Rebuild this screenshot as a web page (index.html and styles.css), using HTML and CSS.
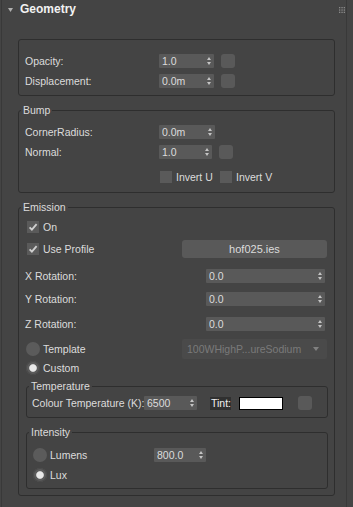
FILE: index.html
```html
<!DOCTYPE html>
<html lang="en">
<head>
    <meta charset="UTF-8">
    <meta name="viewport" content="width=device-width, initial-scale=1.0">
    <title>Geometry</title>
    <link rel="stylesheet" href="styles.css">
</head>
<body>
<div class="rollout">
    <div class="rollout-head">
        <svg class="fold" width="5" height="4" viewBox="0 0 5 4"><path d="M0 0H5L2.5 4Z"/></svg>
        <span class="title">Geometry</span>
        <svg class="grip" width="6" height="6" viewBox="0 0 6 6">
            <rect x="0" y="0" width="1.3" height="1.3"/><rect x="2.4" y="0" width="1.3" height="1.3"/><rect x="4.7" y="0" width="1.3" height="1.3"/>
            <rect x="0" y="2.4" width="1.3" height="1.3"/><rect x="2.4" y="2.4" width="1.3" height="1.3"/><rect x="4.7" y="2.4" width="1.3" height="1.3"/>
            <rect x="0" y="4.7" width="1.3" height="1.3"/><rect x="2.4" y="4.7" width="1.3" height="1.3"/><rect x="4.7" y="4.7" width="1.3" height="1.3"/>
        </svg>
    </div>

    <!-- opacity / displacement -->
    <div class="group first">
        <div class="row">
            <span class="lbl">Opacity:</span>
            <span class="spin w55"><span class="val">1.0</span><span class="arr"><i></i><i></i></span></span>
            <span class="map"></span>
        </div>
        <div class="row gap6">
            <span class="lbl">Displacement:</span>
            <span class="spin w55"><span class="val">0.0m</span><span class="arr"><i></i><i></i></span></span>
            <span class="map"></span>
        </div>
    </div>

    <fieldset class="group bump">
        <legend>Bump</legend>
        <div class="row r-corner">
            <span class="lbl">CornerRadius:</span>
            <span class="spin w56"><span class="val">0.0m</span><span class="arr"><i></i><i></i></span></span>
        </div>
        <div class="row gap6">
            <span class="lbl">Normal:</span>
            <span class="spin w53"><span class="val">1.0</span><span class="arr"><i></i><i></i></span></span>
            <span class="map"></span>
        </div>
        <div class="row r-invert">
            <span class="pad"></span>
            <span class="cb"></span><span class="cb-text">Invert U</span>
            <span class="cb"></span><span class="cb-text">Invert V</span>
        </div>
    </fieldset>

    <fieldset class="group emission">
        <legend>Emission</legend>
        <div class="row r-on">
            <span class="cb"><svg width="12" height="12" viewBox="0 0 12 12"><path d="M2.6 6.3L4.9 8.7L9.6 3.1"/></svg></span>
            <span class="cb-text">On</span>
        </div>
        <div class="row r-profile">
            <span class="chk">
                <span class="cb"><svg width="12" height="12" viewBox="0 0 12 12"><path d="M2.6 6.3L4.9 8.7L9.6 3.1"/></svg></span>
                <span class="cb-text">Use Profile</span>
            </span>
            <span class="btn">hof025.ies</span>
        </div>
        <div class="row r-x">
            <span class="lbl rot">X Rotation:</span>
            <span class="spin w119"><span class="val">0.0</span><span class="arr"><i></i><i></i></span></span>
        </div>
        <div class="row r-y">
            <span class="lbl rot">Y Rotation:</span>
            <span class="spin w119"><span class="val">0.0</span><span class="arr"><i></i><i></i></span></span>
        </div>
        <div class="row r-z">
            <span class="lbl rot">Z Rotation:</span>
            <span class="spin w119"><span class="val">0.0</span><span class="arr"><i></i><i></i></span></span>
        </div>
        <div class="row r-template">
            <span class="opt"><span class="radio"></span>Template</span>
            <span class="combo"><span class="val">100WHighP...ureSodium</span><i class="drop"></i></span>
        </div>
        <div class="row r-custom">
            <span class="opt"><span class="radio on"></span>Custom</span>
        </div>

        <fieldset class="group sub temp">
            <legend>Temperature</legend>
            <div class="row r-temp">
                <span class="lbl ktemp">Colour Temperature (K):</span>
                <span class="spin w53"><span class="val">6500</span><span class="arr"><i></i><i></i></span></span>
                <span class="tint">Tint:</span>
                <span class="swatch"></span>
                <span class="map tmap"></span>
            </div>
        </fieldset>

        <fieldset class="group sub intensity">
            <legend>Intensity</legend>
            <div class="row r-lumens">
                <span class="opt lum"><span class="radio"></span>Lumens</span>
                <span class="spin w52"><span class="val">800.0</span><span class="arr"><i></i><i></i></span></span>
            </div>
            <div class="row gap6">
                <span class="opt lum"><span class="radio on"></span>Lux</span>
            </div>
        </fieldset>
    </fieldset>
</div>
</body>
</html>
```

FILE: styles.css
```css
*{
    box-sizing: border-box;
}
body{
    margin: 0;
    background: #444444;
    font-family: "Liberation Sans", Arial, sans-serif;
    font-size: 10.5px;
    color: #dcdcdc;
}

.rollout{
    margin-left: 1px;
    width: 346px;
    min-height: 507px;
    border-left: 1px solid #393939;
    border-right: 1px solid #393939;
}
.rollout-head{
    height: 22px;
    display: flex;
    align-items: flex-start;
    padding-left: 6px;
}
.fold{
    fill: #b0b0b0;
    margin-top: 8px;
}
.title{
    margin: 2px 0 0 7px;
    font-size: 12px;
    font-weight: bold;
    line-height: 14px;
    color: #f2f2f2;
}
.grip{
    fill: #8a8a8a;
    margin: 7px 1px 0 auto;
}

/* group boxes */
.group{
    margin: 0 11px 0 16px;
    padding: 0;
    min-width: 0;
    border: 1px solid #2e2e2e;
    border-radius: 3px;
}
legend{
    margin-left: 2px;
    padding: 0 2px;
    line-height: 12px;
}
.first{
    margin-top: 17px;
    padding: 14px 0 7px;
}
.bump{
    margin-top: 8px;
    padding-bottom: 8px;
}
.emission{
    margin-top: 8px;
    padding-bottom: 6px;
}
.group.sub{
    margin: 0 6px 0 7px;
}
.temp{
    margin-top: 5px !important;
    padding-bottom: 7px;
}
.intensity{
    margin-top: 8px !important;
    padding-bottom: 6px;
}

/* rows */
.row{
    display: flex;
    align-items: center;
    height: 14px;
    line-height: 14px;
    padding-left: 6px;
    white-space: nowrap;
}
.gap6{ margin-top: 6px; }
.r-corner{ margin-top: 9px; }
.r-invert{ margin-top: 11px; }
.r-on{ margin-top: 7px; padding-left: 8px; }
.r-profile{ margin-top: 6px; height: 18px; padding-left: 8px; }
.r-x{ margin-top: 11px; }
.r-y{ margin-top: 9px; }
.r-z{ margin-top: 11px; }
.r-template{ margin-top: 8px; height: 20px; padding-left: 7px; }
.r-custom{ margin-top: 2px; padding-left: 7px; }
.r-temp{ margin-top: 4px; padding-left: 5px; }
.r-lumens{ margin-top: 10px; }

.lbl{
    width: 134px;
    flex: none;
}
.lbl.rot{ width: 181px; }
.lbl.ktemp{ width: 112px; }
.pad{ width: 135px; flex: none; }

/* spinners */
.spin{
    display: flex;
    align-items: center;
    height: 14px;
    padding: 0 3px;
    background: #595959;
    border-radius: 1px;
    flex: none;
}
.w52{ width: 52px; }
.w53{ width: 53px; }
.w55{ width: 55px; }
.w56{ width: 56px; }
.w119{ width: 119px; }
.val{
    flex: 1;
    overflow: hidden;
}
.arr{
    display: flex;
    flex-direction: column;
    gap: 2px;
}
.arr i{
    display: block;
    width: 0;
    height: 0;
    border-left: 2.5px solid transparent;
    border-right: 2.5px solid transparent;
}
.arr i:first-child{ border-bottom: 3px solid #c4c4c4; }
.arr i:last-child{ border-top: 3px solid #c4c4c4; }

.map{
    width: 14px;
    height: 14px;
    margin-left: 7px;
    background: #595959;
    border-radius: 3px;
    flex: none;
}

/* checkboxes and radios */
.cb{
    width: 12px;
    height: 12px;
    background: #5a5a5a;
    flex: none;
}
.cb svg{
    display: block;
    fill: none;
    stroke: #cfcfcf;
    stroke-width: 1.8;
}
.cb-text{
    margin-left: 4px;
    width: 44px;
}
.chk{
    display: flex;
    align-items: center;
    width: 155px;
    flex: none;
}
.chk .cb-text{ width: auto; }
.opt{
    display: flex;
    align-items: center;
    width: 156px;
    flex: none;
}
.opt.lum{ width: 121px; }
.radio{
    width: 14px;
    height: 14px;
    margin-right: 3px;
    border-radius: 50%;
    background: #5b5b5b;
    flex: none;
}
.radio.on{
    background: radial-gradient(circle, #e8e8e8 0 3.3px, #5b5b5b 4.3px);
    box-shadow: inset 0 0 0 1px #4a4a4a;
}

/* buttons */
.btn{
    width: 145px;
    height: 18px;
    line-height: 18px;
    text-align: center;
    font-size: 11px;
    background: #595959;
    border-radius: 3px;
}
.combo{
    display: flex;
    align-items: center;
    width: 145px;
    height: 20px;
    padding: 0 8px 0 5px;
    font-size: 10.5px;
    color: #7a7a7a;
    background: #4a4a4a;
    border-radius: 2px;
}
.drop{
    width: 0;
    height: 0;
    border-left: 3px solid transparent;
    border-right: 3px solid transparent;
    border-top: 4px solid #808080;
}

.tint{
    margin-left: 13px;
    width: 21px;
    height: 13px;
    line-height: 13px;
    padding-left: 1px;
    background: #303030;
    color: #f0f0f0;
    flex: none;
}
.swatch{
    margin-left: 8px;
    width: 44px;
    height: 13px;
    background: #ffffff;
    border: 1px solid #000000;
    flex: none;
}
.map.tmap{ margin-left: 15px; }
```
